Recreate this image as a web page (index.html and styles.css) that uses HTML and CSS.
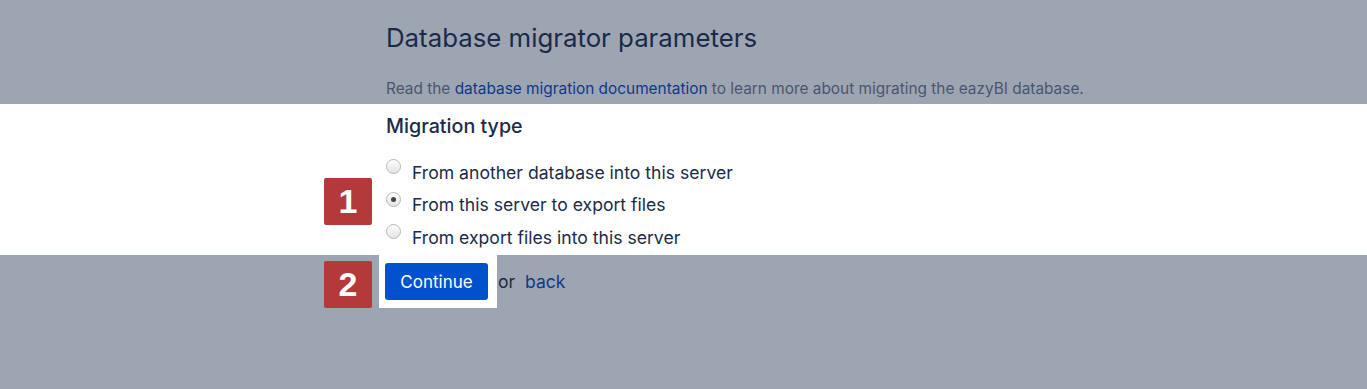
FILE: index.html
```html
<!DOCTYPE html>
<html lang="en">
<head>
    <meta charset="UTF-8">
    <title>Database migrator parameters - eazyBI</title>
    <link rel="stylesheet" href="styles.css">
</head>
<body>
    <!-- Page header -->
    <header class="intro">
        <h1>Database migrator parameters</h1>
        <p>Read the <a href="#">database migration documentation</a> to learn more about migrating the eazyBI database.</p>
    </header>

    <!-- Migration type (highlighted) -->
    <section class="band">
        <h2>Migration type</h2>
        <div class="options">
            <label class="option">
                <span class="radio"></span> From another database into this server
            </label>
            <label class="option">
                <span class="step">1</span>
                <span class="radio checked"></span> From this server to export files
            </label>
            <label class="option">
                <span class="radio"></span> From export files into this server
            </label>
        </div>
    </section>

    <!-- Actions -->
    <div class="actions">
        <span class="step">2</span>
        <div class="spot">
            <button class="continue">Continue</button>
        </div>
        <span class="or">or</span>
        <a href="#" class="back">back</a>
    </div>
</body>
</html>
```

FILE: styles.css
```css
/* General */
body {
    margin: 0;
    background-color: #9ea5b2;
    font-family: Inter, "Liberation Sans", Arial, sans-serif;
    color: #1b2a48;
}

a {
    color: #0c3a86;
    text-decoration: none;
}

/* Header */
.intro {
    height: 104px;
    box-sizing: border-box;
    padding: 22px 0 0 386px;
}

.intro h1 {
    margin: 0;
    font-size: 25.8px;
    font-weight: normal;
    color: #1b2a48;
}

.intro p {
    margin: 26px 0 0;
    font-size: 15.4px;
    color: #4a5570;
}

/* Highlighted band */
.band {
    height: 151px;
    box-sizing: border-box;
    background-color: #fff;
    padding: 10px 0 0 386px;
}

.band h2 {
    margin: 0;
    font-size: 19.7px;
    font-weight: 500;
    color: #1b2a48;
}

.options {
    margin-top: 18px;
}

.option {
    position: relative;
    display: flex;
    align-items: center;
    height: 32.5px;
    font-size: 17.6px;
    color: #1b2a48;
}

.radio {
    width: 13px;
    height: 13px;
    margin: -11px 11px 0 0;
    border: 1px solid #b9b9b9;
    border-radius: 50%;
    background: linear-gradient(#fdfdfd, #e4e4e4);
    display: flex;
    align-items: center;
    justify-content: center;
}

.radio.checked::after {
    content: "";
    width: 5px;
    height: 5px;
    border-radius: 50%;
    background-color: #444;
}

/* Step badges */
.step {
    width: 48px;
    height: 47px;
    border-radius: 2px;
    background-color: #b3393b;
    color: #fff;
    font-family: "Liberation Sans", Arial, sans-serif;
    font-size: 34px;
    font-weight: bold;
    display: flex;
    align-items: center;
    justify-content: center;
}

.option .step {
    position: absolute;
    left: -62px;
    top: -11px;
}

/* Actions */
.actions {
    display: flex;
    align-items: center;
    padding-left: 324px;
    margin-top: 5px;
}

.spot {
    display: flex;
    align-items: center;
    height: 53px;
    margin: -5px 0 0 7px;
    padding: 0 9px 0 6px;
    background-color: #fff;
}

.continue {
    width: 103px;
    height: 37px;
    padding: 0;
    border: none;
    border-radius: 3px;
    background-color: #0052cc;
    color: #fff;
    font-family: inherit;
    font-size: 17px;
}

.or {
    margin: -6px 0 0 1px;
    font-size: 17.5px;
    color: #1b2a48;
}

.back {
    margin: -6px 0 0 10px;
    font-size: 17.5px;
}
```
